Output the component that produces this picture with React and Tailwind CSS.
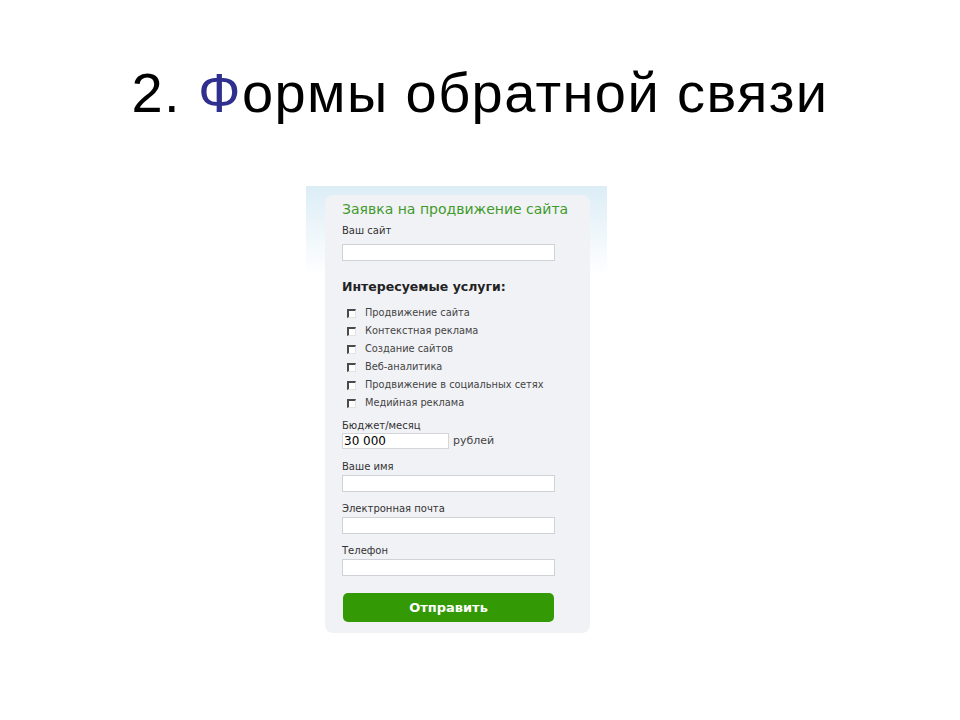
export default function App() {
  const services = [
    "Продвижение сайта",
    "Контекстная реклама",
    "Создание сайтов",
    "Веб-аналитика",
    "Продвижение в социальных сетях",
    "Медийная реклама",
  ];
  const form = { fontFamily: '"DejaVu Sans", Verdana, sans-serif' };
  return (
    <div className="w-[960px] h-[720px] bg-white overflow-hidden">
      <h1
        className="pt-[61px] text-center text-[56px] leading-[64px] tracking-[1.4px] text-black font-normal"
        style={{ fontFamily: '"Liberation Sans", Arial, sans-serif' }}
      >
        2. <span className="text-[#2f2f8f]">Ф</span>ормы обратной связи
      </h1>
      <div
        className="ml-[306px] mt-[61px] w-[301px] pt-[9px] pl-[19px] pr-[17px] bg-[linear-gradient(to_bottom,#dcedf6,#ffffff_90px)]"
        style={form}
      >
        <div className="w-[265px] rounded-[8px] bg-[#f1f2f6] pl-[17px] pr-[35px] pt-[6px] pb-[11px] flex flex-col">
          <div className="h-[16px] leading-[16px] text-[14px] text-[#3f9a2b] whitespace-nowrap">
            Заявка на продвижение сайта
          </div>
          <div className="mt-[8px] h-[12px] leading-[12px] text-[10px] text-[#333]">Ваш сайт</div>
          <div className="mt-[7px] h-[17px] w-[213px] bg-white border border-[#cfd2d6]" />
          <div className="mt-[18px] h-[16px] leading-[16px] text-[12.5px] font-bold text-[#222] whitespace-nowrap">
            Интересуемые услуги:
          </div>
          <div className="mt-[9px] flex flex-col">
            {services.map((s) => (
              <div key={s} className="h-[18px] flex items-center pl-[5px] gap-[9px]">
                <span className="w-[9px] h-[9px] bg-white border-t-[2px] border-l-[2px] border-b border-r border-t-[#4a4a4a] border-l-[#4a4a4a] border-b-[#e2e2e2] border-r-[#e2e2e2]" />
                <span className="text-[9.8px] leading-[12px] text-[#444] whitespace-nowrap">{s}</span>
              </div>
            ))}
          </div>
          <div className="mt-[8px] h-[12px] leading-[12px] text-[10px] text-[#333]">Бюджет/месяц</div>
          <div className="mt-[1px] flex items-center gap-[4px]">
            <div className="h-[16px] w-[107px] bg-white border border-[#d4d6da] pl-[1px] text-[12px] leading-[14px] text-black">
              30 000
            </div>
            <span className="text-[11px] leading-[14px] text-[#444]">рублей</span>
          </div>
          <div className="mt-[12px] h-[12px] leading-[12px] text-[10px] text-[#333]">Ваше имя</div>
          <div className="mt-[2px] h-[17px] w-[213px] bg-white border border-[#cfd2d6]" />
          <div className="mt-[11px] h-[12px] leading-[12px] text-[10px] text-[#333]">Электронная почта</div>
          <div className="mt-[2px] h-[17px] w-[213px] bg-white border border-[#cfd2d6]" />
          <div className="mt-[11px] h-[12px] leading-[12px] text-[10px] text-[#333]">Телефон</div>
          <div className="mt-[2px] h-[17px] w-[213px] bg-white border border-[#cfd2d6]" />
          <button className="mt-[17px] ml-[1px] h-[29px] w-[211px] rounded-[5px] bg-[#339a05] text-white text-[13px] font-bold">
            Отправить
          </button>
        </div>
      </div>
    </div>
  );
}
